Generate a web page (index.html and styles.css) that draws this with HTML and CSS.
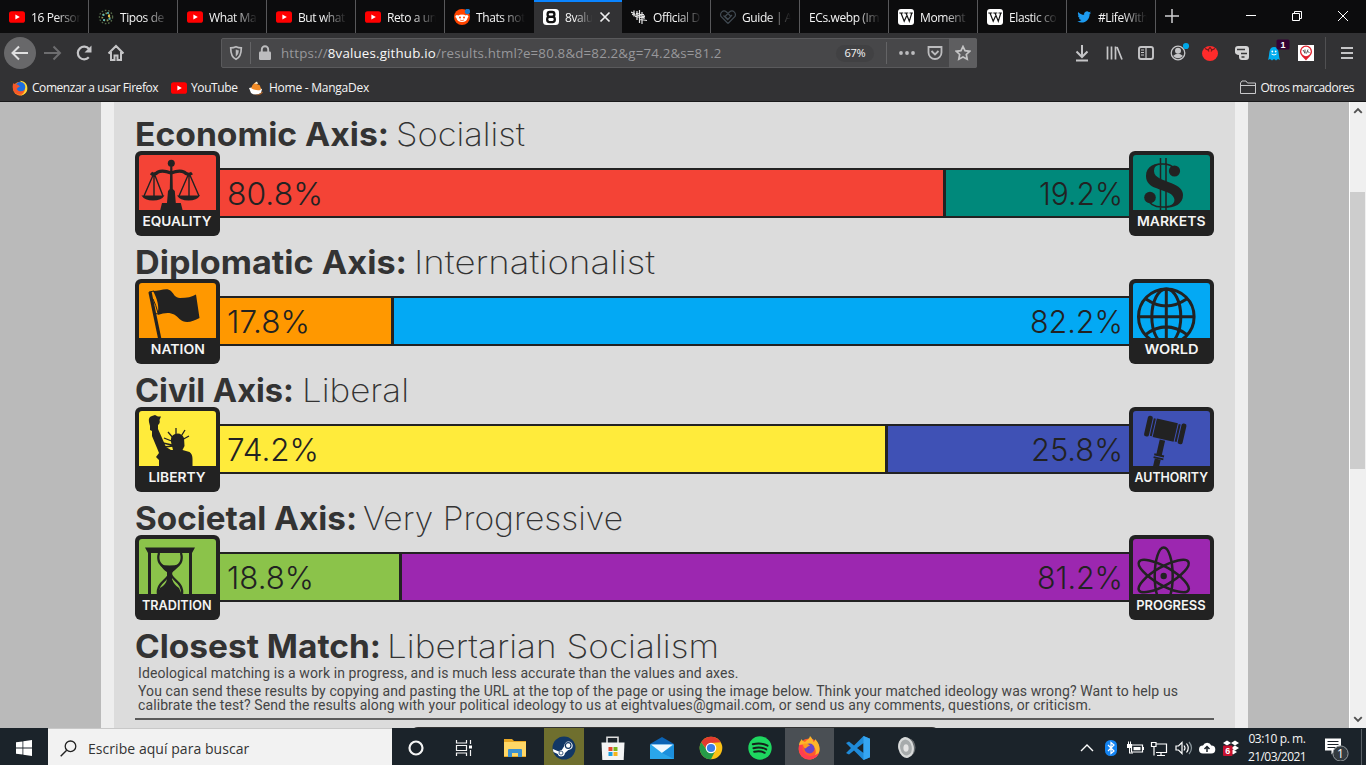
FILE: index.html
```html
<!DOCTYPE html>
<html lang="es">
<head>
<meta charset="utf-8">
<title>8values</title>
<link rel="stylesheet" href="styles.css">
</head>
<body>
<svg class="defs" width="0" height="0">
  <defs>
    <symbol id="yt" viewBox="0 0 16 12"><rect width="16" height="11.6" y=".2" rx="2.6" fill="#f00"/><path d="M6.4 3.4v5.2L10.8 6z" fill="#fff"/></symbol>
    <symbol id="wiki" viewBox="0 0 16 16"><rect width="16" height="16" rx="3" fill="#fff"/><path d="M1.3 4h4M6.3 4h4M11.5 4h3.4M3 4l3.2 8.3L8.6 7M8 4l3.3 8.3L13.8 4" stroke="#111" stroke-width="1.2" fill="none"/></symbol>
    <symbol id="fox" viewBox="0 0 24 24"><circle cx="12" cy="13" r="10.5" fill="#ff5a2c"/><path d="M2 10C2 6 4 5 4.500 3c1 2 2 2.500 3.500 3C10 3.500 12 4 13 0c2 2 3 4 3.500 6 1-1 1.500-1 1.500-3 4 4 5 8 4.500 12-1 5-6 8.500-10.500 8.500 6-2 8-6 6-11-2-4-7-5-9-4z" fill="#ffb52a"/><path d="M2 9c-1 7 2 14 10 14.500 5 0 9-3 10-7-4 4-10 5-14 1-3-3-3-6-2-9z" fill="#ff3d52"/><circle cx="12.500" cy="12.500" r="5" fill="#6a45c8"/><path d="M6 8c3-1 6 0 7 2-3 0-3 2-5 2.500C7 12 6 10 6 8z" fill="#ff9a1f"/></symbol>
    <symbol id="foxblue" viewBox="0 0 24 24"><circle cx="12" cy="13" r="10.500" fill="#ff7a1c"/><path d="M12 1c7 0 12 6 11 13-1 6-6 9-10 9.500 6-4 8-9 5-15z" fill="#ffd83a"/><circle cx="12.500" cy="10.500" r="7.500" fill="#1d6fe0"/><path d="M2 5c2 1 4 2 7 2l3 3c-3 0-3 2-5 3 2 5 8 5 12 2-2 6-9 8-13 5C1 17 0 10 2 5z" fill="#f4572a"/></symbol>
  </defs>
</svg>

<header class="tabs">
  <div class="tab"><svg class="fav" viewBox="0 0 16 16"><use href="#yt" y="2" height="12"/></svg><span>16 Person</span></div>
  <div class="tab"><svg class="fav" viewBox="0 0 16 16"><g fill="none" stroke-dasharray="1.600 1.700"><circle cx="8" cy="8" r="6.600" stroke="#566b4b" stroke-width="1.300"/><circle cx="8" cy="8" r="3.700" stroke="#8f9a57" stroke-width="1.700"/></g><path d="M4.500 6h2M9 4h2M10.500 10h2M5 11h2" stroke="#58c3c7" stroke-width="1.600"/><circle cx="11" cy="7" r="1.200" fill="#e1c14c"/></svg><span>Tipos de</span></div>
  <div class="tab"><svg class="fav" viewBox="0 0 16 16"><use href="#yt" y="2" height="12"/></svg><span>What Ma</span></div>
  <div class="tab"><svg class="fav" viewBox="0 0 16 16"><use href="#yt" y="2" height="12"/></svg><span>But what</span></div>
  <div class="tab"><svg class="fav" viewBox="0 0 16 16"><use href="#yt" y="2" height="12"/></svg><span>Reto a un</span></div>
  <div class="tab"><svg class="fav" viewBox="0 0 16 16"><circle cx="8" cy="8" r="8" fill="#ff4500"/><ellipse cx="8" cy="9.300" rx="5.300" ry="3.800" fill="#fff"/><circle cx="3" cy="7.500" r="1.500" fill="#fff"/><circle cx="12.800" cy="7.500" r="1.500" fill="#fff"/><circle cx="6" cy="8.500" r="1" fill="#ff4500"/><circle cx="10" cy="8.500" r="1" fill="#ff4500"/><path d="M6 11q2 1.200 4 0M8 5.500l.7-2.800" stroke="#ff4500" fill="none" stroke-width=".7"/><circle cx="13.500" cy="2.500" r="2.700" fill="#1677c9"/></svg><span>Thats not</span></div>
  <div class="tab active"><svg class="fav" viewBox="0 0 16 16"><rect width="16" height="16" rx="3.500" fill="#fff"/><g fill="none" stroke="#111" stroke-width="2.300"><rect x="4.600" y="3" width="6.800" height="4.800" rx="2.200"/><rect x="4.200" y="7.800" width="7.600" height="5.300" rx="2.300"/></g></svg><span>8valu</span><svg class="close" viewBox="0 0 12 12"><path d="M1.500 1.500l9 9M10.500 1.500l-9 9" stroke="#eee" stroke-width="1.700"/></svg></div>
  <div class="tab"><svg class="fav" viewBox="0 0 16 16"><path d="M0 3l4 2M3 1.500v6M1 5.500l13 2M6 2v9M8.500 1v13M11 3v12M4 7.500l9 1M9 10.500l7 1M13 6v4M5 4.500l8 1" stroke="#e5e5e5" stroke-width="1.200"/></svg><span>Official D</span></div>
  <div class="tab"><svg class="fav" viewBox="0 0 16 16"><path d="M8 14.500L1 7.500C-.5 4 3 0 6.500 3L11 7.500M8 14.500l7-7C16.500 4 13 0 9.500 3L5 7.500 8 10.500 12 6M3.500 6.500L8 11" fill="none" stroke="#414a52" stroke-width="1.200"/></svg><span>Guide | A</span></div>
  <div class="tab noicon"><span>ECs.webp (Im</span></div>
  <div class="tab"><svg class="fav"><use href="#wiki"/></svg><span>Moment</span></div>
  <div class="tab"><svg class="fav"><use href="#wiki"/></svg><span>Elastic co</span></div>
  <div class="tab"><svg class="fav" viewBox="-1 -1 26 26"><path d="M23.600 5c-.8.400-1.700.6-2.600.8 1-.6 1.600-1.500 2-2.600-.9.500-1.900.9-2.900 1.100a4.600 4.600 0 0 0-7.900 4.200C8.400 8.300 5 6.500 2.700 3.700c-1.200 2-.6 4.700 1.400 6-.7 0-1.400-.2-2-.6 0 2.200 1.500 4.200 3.600 4.600-.6.200-1.300.2-2 .1.600 1.800 2.300 3.100 4.200 3.200A9.300 9.300 0 0 1 1 18.900c9 5.700 20.200-.1 20.200-11.700.9-.6 1.700-1.400 2.400-2.200z" fill="#1d9bf0"/></svg><span>#LifeWith</span></div>
  <svg class="plus" viewBox="0 0 14 14"><path d="M7 0v14M0 7h14" stroke="#d0d0d2" stroke-width="1.500"/></svg>
  <div class="window">
    <svg viewBox="0 0 10 10"><path d="M0 4.500h10" stroke="#fff"/></svg>
    <svg viewBox="0 0 10 10"><path d="M.5 2.500h7v7h-7zM2.500 2.500v-2h7v7h-2" fill="none" stroke="#fff"/></svg>
    <svg viewBox="0 0 10 10"><path d="M0 0l10 10M10 0L0 10" stroke="#fff"/></svg>
  </div>
</header>

<nav class="toolbar">
  <div class="navbtns">
    <svg class="back" viewBox="0 0 32 32"><circle cx="16" cy="16" r="16" fill="#68686a"/><path d="M24 16H9M15 9.500L8.500 16l6.500 6.500" fill="none" stroke="#e0e0e1" stroke-width="2"/></svg>
    <svg viewBox="0 0 32 32"><path d="M8 16h15M17.500 9.500L24 16l-6.500 6.500" fill="none" stroke="#6d6d6f" stroke-width="2"/></svg>
    <svg viewBox="0 0 32 32"><path d="M20.800 20.200A6.300 6.300 0 1 1 21 12" fill="none" stroke="#c5c5c7" stroke-width="2.200"/><path d="M23.500 8.500v7h-7z" fill="#c5c5c7"/></svg>
    <svg viewBox="0 0 32 32"><path d="M8.500 16.500L16 9l7.500 7.500M11 15v8h3.500v-4.500h3V23H21v-8" fill="none" stroke="#c5c5c7" stroke-width="2"/></svg>
  </div>
  <div class="url">
    <svg class="u-shield" viewBox="0 0 14 16"><path d="M7 1.800c2 .9 4 1.100 5.300 1.100C12.300 9 11 12.500 7 14.300 3 12.500 1.700 9 1.700 2.900 3 2.900 5 2.700 7 1.800z" fill="none" stroke="#bcbcbe" stroke-width="1.700"/><path d="M7 4.500v7M7 5l2.500.6C9.300 8.500 8.700 10 7 11" fill="#bcbcbe" stroke="#bcbcbe" stroke-width=".5"/></svg>
    <i></i>
    <svg class="u-lock" viewBox="0 0 12 16"><rect y="6.500" width="12" height="8.500" rx="1.200" fill="#bcbcbe"/><path d="M2.800 7V4.500a3.200 3.200 0 0 1 6.400 0V7" fill="none" stroke="#bcbcbe" stroke-width="1.900"/></svg>
    <span class="addr">https://<b>8values.github.io</b>/results.html?e=80.8&amp;d=82.2&amp;g=74.2&amp;s=81.2</span>
    <span class="pct">67%</span>
    <i></i>
    <svg class="u-dots" viewBox="0 0 16 4"><g fill="#bcbcbe"><circle cx="2" cy="2" r="1.900"/><circle cx="8" cy="2" r="1.900"/><circle cx="14" cy="2" r="1.900"/></g></svg>
    <svg class="u-pocket" viewBox="0 0 16 16"><path d="M1.500 2h13v5.500a6.500 6.500 0 0 1-13 0z" fill="none" stroke="#bcbcbe" stroke-width="1.800"/><path d="M4.500 6L8 9.500 11.500 6" fill="none" stroke="#bcbcbe" stroke-width="1.800"/></svg>
    <div class="star"><svg width="16" height="16" viewBox="0 0 16 16"><path d="M8 1.500l2 4.200 4.700.6-3.400 3.200.9 4.700L8 11.900l-4.200 2.300.9-4.700L1.300 6.300 6 5.700z" fill="none" stroke="#c4c4c5" stroke-width="1.700"/></svg></div>
  </div>
  <div class="ext">
    <svg viewBox="0 0 32 32"><path d="M16 8v12M10.500 14.500L16 20l5.500-5.500M10 23.500h12" fill="none" stroke="#c5c5c7" stroke-width="2"/></svg>
    <svg viewBox="0 0 32 32"><path d="M9.500 9.500v13M13.500 9.500v13M17.500 9.500v13M19 10l5 12.500" fill="none" stroke="#c5c5c7" stroke-width="1.700"/></svg>
    <svg viewBox="0 0 32 32"><rect x="9" y="10" width="14" height="12" rx="2" fill="none" stroke="#c5c5c7" stroke-width="1.900"/><path d="M16 10v12M11 13h3M11 15.500h3M11 18h3" stroke="#c5c5c7" stroke-width="1.200"/></svg>
    <svg viewBox="0 0 32 32"><circle cx="16" cy="16" r="6.800" fill="none" stroke="#c5c5c7" stroke-width="1.300"/><circle cx="16" cy="13.800" r="3" fill="#c5c5c7"/><path d="M11 19q5-4.500 10 0-5 4.500-10 0z" fill="#c5c5c7"/><circle cx="24" cy="9" r="3.100" fill="#00a8e8"/></svg>
    <svg viewBox="0 0 32 32"><ellipse cx="16" cy="16.500" rx="8" ry="7.600" fill="#ff2b2b"/><path d="M11 11.500l3 1.500 2-2.500 2 2.500 3-1.500M14 13l1 1.500M18 13l-1 1.500" fill="none" stroke="#6b1b1b" stroke-width="1.100"/></svg>
    <svg viewBox="0 0 32 32"><path d="M12 9h8q3 0 3 3v8q0 3-3 3h-4q-3 0-3-3v-2q-4-.5-4-3v-3q0-3 3-3z" fill="#d4d4d5"/><path d="M11 12.500h8M15 16.500h6M15.500 20h3" stroke="#38383a" stroke-width="1.400"/></svg>
    <svg viewBox="0 0 32 32"><path d="M10 23c2-5 0-13 6-13s4 8 6 13l-2-1-2 1.500-2-1.500-2 1.500-2-1.500z" fill="#00aef0"/><circle cx="14.300" cy="14.500" r=".9" fill="#fff"/><circle cx="17.700" cy="14.500" r=".9" fill="#fff"/><path d="M13.500 17q2.500 2 5 0" stroke="#fff" fill="none"/><rect x="18.500" y="2.500" width="13" height="10" rx="1.500" fill="#330033"/><text x="25" y="10.800" class="badge">1</text></svg>
    <svg viewBox="0 0 32 32"><rect x="8" y="8" width="16" height="16" fill="#fff"/><path d="M16 23.500c-2-3-6-5-6-9a6 6 0 0 1 12 0c0 4-4 6-6 9z" fill="#e0202c"/><circle cx="16" cy="14.500" r="4.700" fill="#fff"/><path d="M13 13l2 3M15 12.500v4M18 12.500l-1.500 4M17.500 14l2 2" stroke="#444" stroke-width=".9"/></svg>
    <i></i>
    <svg class="menu" viewBox="0 0 32 32"><path d="M10 11h12M10 16h12M10 21h12" stroke="#c5c5c7" stroke-width="1.900"/></svg>
  </div>
</nav>

<div class="bookmarks">
  <svg class="bm"><use href="#foxblue"/></svg><span class="b1">Comenzar a usar Firefox</span>
  <svg class="bm" viewBox="0 0 16 16"><use href="#yt" y="2" height="12"/></svg><span class="b2">YouTube</span>
  <svg class="bm" viewBox="0 0 16 16"><path d="M1 8q7-2 13 1l-1 4q-6 3-10 0z" fill="#fff"/><path d="M3.500 8.500q0-4 4-6 1 2 4 2.500 2 3 1 5-4 1-9-1.500z" fill="#f18b26"/><path d="M6 3.500l3-2 1 2.500z" fill="#fff3d5"/><path d="M5 14.500q6 1 9-3l1 1q-3 4-10 2z" fill="#b0642b"/></svg><span class="b3">Home - MangaDex</span>
  <svg class="folder" viewBox="0 0 16 15"><path d="M.5 13.500V3L2 1h4l1.500 2h8v10.500zM.5 5.500h15" fill="none" stroke="#c8c8ca" stroke-width="1"/></svg><span class="b4">Otros marcadores</span>
</div>

<main class="viewport">
  <div class="page">
    <section class="axis">
      <svg class="head" viewBox="0 0 1079 33"><text class="hb" x="0" y="28" textLength="254" lengthAdjust="spacingAndGlyphs">Economic Axis:</text><text class="hl" x="261" y="28" textLength="129" lengthAdjust="spacingAndGlyphs">Socialist</text></svg>
      <div class="row">
        <svg class="tile" viewBox="0 0 85 85"><rect class="k" width="85" height="85" rx="6"/><path d="M4 59V7q0-3 3-3h71q3 0 3 3v52z" fill="#f44336"/><circle class="k" cx="36.300" cy="12.300" r="3.500"/><path class="s" stroke-width="3.200" d="M16 22q3 3 7-1 5-2 13 1 8-3 13-1 4 4 8 1"/><path class="s" stroke-width="1.400" d="M19 22L9 45M19 22v23M19 22l9 23M54 22L44 45M54 22v23M54 22l10 23"/><path class="k" d="M6.500 44.500h23q-3 5-11.500 5t-11.500-5zM42 44.500h23q-3 5-11.500 5T42 44.500zM35.300 12h2l.5 26 2 2 1 12h5l2 8H25l2-8h5l1-12 1.800-2z"/><text x="7.500" y="74.700" textLength="69" lengthAdjust="spacingAndGlyphs">EQUALITY</text></svg>
        <div class="bar"><div class="left red" style="width:726px"><svg class="num" width="96"><text x="0" y="35" textLength="96" lengthAdjust="spacingAndGlyphs">80.8%</text></svg></div><div class="right teal"><svg class="num" width="84"><text x="0" y="35" textLength="84" lengthAdjust="spacingAndGlyphs">19.2%</text></svg></div></div>
        <svg class="tile" viewBox="0 0 85 85"><rect class="k" width="85" height="85" rx="6"/><path d="M4 59V7q0-3 3-3h71q3 0 3 3v52z" fill="#00897b"/><path class="s" stroke-width="1.500" d="M31.500 7v53M37 7v53M46 18q-4-5-12-5-10 0-13 6M18 47q3 9 15 9 9 0 14-4"/><path class="k" d="M17 25C17 15 26 12 34 12q-9 1-9 8c0 7 10 9 17 12 8 3 12 7 12 12 0 9-8 13-20 13 8-1 13-5 11-10-2-6-12-7-18-10-6-2-10-6-10-12z"/><circle class="k" cx="45.500" cy="20" r="5.600"/><circle class="k" cx="21" cy="46.500" r="5.800"/><text x="8" y="74.700" textLength="68.500" lengthAdjust="spacingAndGlyphs">MARKETS</text></svg>
      </div>
    </section>
    <section class="axis">
      <svg class="head" viewBox="0 0 1079 33"><text class="hb" x="0" y="28" textLength="272" lengthAdjust="spacingAndGlyphs">Diplomatic Axis:</text><text class="hl" x="279" y="28" textLength="241" lengthAdjust="spacingAndGlyphs">Internationalist</text></svg>
      <div class="row">
        <svg class="tile" viewBox="0 0 85 85"><rect class="k" width="85" height="85" rx="6"/><path d="M4 59V7q0-3 3-3h71q3 0 3 3v52z" fill="#ff9800"/><path class="s" stroke-width="3.300" d="M15 13l10 48"/><path class="s" stroke-width="1" d="M14 13l5-1M21 35l2-1q-2-8-5-14"/><path class="k" d="M18 12c7 0 14-4 18 0 3 3 4 7 9 7 7 0 12-1 16-3.500l3.500 23.500c-7 4-15 6-20 1-5-6-11-8-22-4 2-8 0-16-4.500-24z"/><text x="15.800" y="74.700" textLength="54" lengthAdjust="spacingAndGlyphs">NATION</text></svg>
        <div class="bar"><div class="left orange" style="width:174px"><svg class="num" width="84"><text x="0" y="35" textLength="83" lengthAdjust="spacingAndGlyphs">17.8%</text></svg></div><div class="right blue"><svg class="num" width="93"><text x="0" y="35" textLength="93" lengthAdjust="spacingAndGlyphs">82.2%</text></svg></div></div>
        <svg class="tile" viewBox="0 0 85 85"><rect class="k" width="85" height="85" rx="6"/><path d="M4 59V7q0-3 3-3h71q3 0 3 3v52z" fill="#03a9f4"/><g class="s" stroke-width="3"><circle cx="37.300" cy="37.700" r="27.800"/><ellipse cx="37.300" cy="37.700" rx="14.500" ry="27.800"/><path d="M37.300 10v50M9.500 37.700h56M17 20q20 14 40.600 0M17 55.400q20-15 40.600 0"/></g><path class="k" d="M4 59h77v9H4z"/><text x="15.500" y="74.700" textLength="54" lengthAdjust="spacingAndGlyphs">WORLD</text></svg>
      </div>
    </section>
    <section class="axis">
      <svg class="head" viewBox="0 0 1079 33"><text class="hb" x="0" y="28" textLength="159" lengthAdjust="spacingAndGlyphs">Civil Axis:</text><text class="hl" x="167" y="28" textLength="107" lengthAdjust="spacingAndGlyphs">Liberal</text></svg>
      <div class="row">
        <svg class="tile" viewBox="0 0 85 85"><rect class="k" width="85" height="85" rx="6"/><path d="M4 59V7q0-3 3-3h71q3 0 3 3v52z" fill="#ffeb3b"/><path class="k" d="M14 15q-1-5 3-6l3-1 3 1.500h3L24.500 13q1 3-1.500 5v4l4 9 4 9 5 3h2l-2-8q-1-6 4-8 6-2 9 4l.5 8-2 4 7 2q3 2 3 7v8H24V53l-3-3 3-4-2-5-5-12v-5l-2-1v-4z"/><path class="s" stroke-width="1.300" d="M29 31l10 4M33 25l6 7M41 21v10M50 23l-5 8M54 29l-9 5M28 36l9 2M29 40l9-1"/><text x="13.500" y="74.700" textLength="57" lengthAdjust="spacingAndGlyphs">LIBERTY</text></svg>
        <div class="bar"><div class="left yellow" style="width:668px"><svg class="num" width="92"><text x="0" y="35" textLength="92" lengthAdjust="spacingAndGlyphs">74.2%</text></svg></div><div class="right indigo"><svg class="num" width="92"><text x="0" y="35" textLength="92" lengthAdjust="spacingAndGlyphs">25.8%</text></svg></div></div>
        <svg class="tile" viewBox="0 0 85 85"><rect class="k" width="85" height="85" rx="6"/><path d="M4 59V7q0-3 3-3h71q3 0 3 3v52z" fill="#3f51b5"/><g class="k" transform="rotate(13 36 23)"><rect x="16.500" y="12.500" width="5" height="21" rx="2"/><rect x="22.500" y="14" width="2" height="18"/><rect x="25.500" y="13.500" width="21.500" height="19"/><rect x="48" y="14" width="2" height="18"/><rect x="51" y="12.500" width="5" height="21" rx="2"/><rect x="33" y="33.500" width="5.500" height="16"/><rect x="31" y="48" width="10" height="2"/><rect x="31" y="51" width="10" height="2"/><rect x="32.500" y="53" width="6" height="9"/></g><text x="5.500" y="74.700" textLength="73.500" lengthAdjust="spacingAndGlyphs">AUTHORITY</text></svg>
      </div>
    </section>
    <section class="axis">
      <svg class="head" viewBox="0 0 1079 33"><text class="hb" x="0" y="28" textLength="222" lengthAdjust="spacingAndGlyphs">Societal Axis:</text><text class="hl" x="228" y="28" textLength="260" lengthAdjust="spacingAndGlyphs">Very Progressive</text></svg>
      <div class="row">
        <svg class="tile" viewBox="0 0 85 85"><rect class="k" width="85" height="85" rx="6"/><path d="M4 59V7q0-3 3-3h71q3 0 3 3v52z" fill="#8bc34a"/><path class="k" d="M10 12.500h50l-3 5.500H13zM13 17h3v43h-3zM54 17h3v43h-3zM25 29q9 3 20 0-4 6-8 8v7q2 6 7 9l3 7H22l3-7q6-3 7-9v-7q-4-2-7-8z"/><path class="s" stroke-width="2.300" d="M24 18c-4 14 10 14 10 20.500S21 47 23 60M46 18c4 14-10 14-10 20.500S49 47 47 60"/><text x="7" y="74.700" textLength="69.500" lengthAdjust="spacingAndGlyphs">TRADITION</text></svg>
        <div class="bar"><div class="left lime" style="width:182px"><svg class="num" width="87"><text x="0" y="35" textLength="87" lengthAdjust="spacingAndGlyphs">18.8%</text></svg></div><div class="right purple"><svg class="num" width="86"><text x="0" y="35" textLength="86" lengthAdjust="spacingAndGlyphs">81.2%</text></svg></div></div>
        <svg class="tile" viewBox="0 0 85 85"><rect class="k" width="85" height="85" rx="6"/><path d="M4 59V7q0-3 3-3h71q3 0 3 3v52z" fill="#9c27b0"/><g class="s" stroke-width="2.500"><ellipse cx="34.700" cy="41" rx="9" ry="28.500"/><ellipse cx="34.700" cy="41" rx="9" ry="28.500" transform="rotate(60 34.700 41)"/><ellipse cx="34.700" cy="41" rx="9" ry="28.500" transform="rotate(-60 34.700 41)"/></g><circle class="k" cx="34.700" cy="41" r="3.200"/><path class="k" d="M4 59h77v12H4z"/><text x="7.200" y="74.700" textLength="69.500" lengthAdjust="spacingAndGlyphs">PROGRESS</text></svg>
      </div>
    </section>
    <svg class="head" viewBox="0 0 1079 33"><text class="hb" x="0" y="28" textLength="246" lengthAdjust="spacingAndGlyphs">Closest Match:</text><text class="hl" x="252" y="28" textLength="332" lengthAdjust="spacingAndGlyphs">Libertarian Socialism</text></svg>
    <p class="note">Ideological matching is a work in progress, and is much less accurate than the values and axes.</p>
    <p class="info">You can send these results by copying and pasting the URL at the top of the page or using the image below. Think your matched ideology was wrong? Want to help us<br>calibrate the test? Send the results along with your political ideology to us at eightvalues@gmail.com, or send us any comments, questions, or criticism.</p>
    <hr>
    <div class="card"></div>
  </div>
  <aside class="scroll">
    <svg viewBox="0 0 17 17"><path d="M4.500 11L8.500 7l4 4" fill="none" stroke="#505050" stroke-width="2"/></svg>
    <div class="thumb"></div>
    <svg viewBox="0 0 17 17"><path d="M4.500 6l4 4 4-4" fill="none" stroke="#505050" stroke-width="2"/></svg>
  </aside>
</main>

<footer class="taskbar">
  <div class="start"><svg width="16" height="16" viewBox="0 0 16 16"><path d="M0 2.300L6.500 1.400v6.200H0zM7.300 1.300L16 0v7.600H7.300zM0 8.400h6.500v6.200L0 13.700zM7.300 8.400H16V16l-8.700-1.300z" fill="#fff"/></svg></div>
  <div class="search"><svg width="17" height="17" viewBox="0 0 17 17"><circle cx="10.500" cy="6.300" r="5.300" fill="none" stroke="#222" stroke-width="1.300"/><path d="M6.700 10.300L.7 16.300" stroke="#222" stroke-width="1.400"/></svg><span>Escribe aquí para buscar</span></div>
  <div class="apps">
    <div><svg viewBox="0 0 24 24"><circle cx="12" cy="12" r="6.500" fill="none" stroke="#f4f4f4" stroke-width="2.200"/></svg></div>
    <div class="views"><svg viewBox="0 0 24 24"><path d="M4.500 4v3h10V4M4.500 20v-3h10v3M4.500 9.500h10v5h-10zM18.500 4v4M18.500 14v6" fill="none" stroke="#f4f4f4" stroke-width="1.200"/><path d="M17 9.500h3v3h-3z" fill="#fff"/></svg></div>
    <div><svg viewBox="0 0 24 24"><path d="M1 3h8l2 2h12v16H1z" fill="#e9a825"/><path d="M1 6h22v14H1z" fill="#ffd766"/><path d="M5 21v-7q0-1 1-1h12q1 0 1 1v7h-4v-4H9v4z" fill="#3d91cf"/></svg></div>
    <div class="steam"><svg viewBox="0 0 24 24"><circle cx="12" cy="12" r="11.500" fill="#123765"/><path d="M.8 13l6 2.500q1-1.500 3-1.500l2.500-4a4.200 4.200 0 1 1 4 4L13 17q-.5 3.500-4 3.500-2.500 0-3.300-2.500L1.500 16z" fill="#fff"/><circle cx="16.200" cy="9.500" r="2.800" fill="#fff" stroke="#123765" stroke-width="1.200"/><circle cx="9" cy="17" r="2" fill="none" stroke="#123765" stroke-width=".8"/></svg></div>
    <div><svg viewBox="0 0 24 24"><path d="M6 7V1.200h11V7" fill="none" stroke="#ddd" stroke-width="1.600"/><path d="M.5 6.500h23L22.700 24H1.300z" fill="#f4f4f4"/><path d="M7.500 11h4v4h-4z" fill="#e5472d"/><path d="M12.500 11h4v4h-4z" fill="#78b51b"/><path d="M7.500 16h4v4h-4z" fill="#1ba0e1"/><path d="M12.500 16h4v4h-4z" fill="#f5b51c"/></svg></div>
    <div><svg viewBox="0 0 24 24"><path d="M0 8L12 1l12 7v15H0z" fill="#0b63b5"/><path d="M0 8.500h24V23H0z" fill="#2aa6ea"/><path d="M1 8.500h22L12 17z" fill="#eef8ff"/><path d="M12 17L24 9v14z" fill="#1c8fdc"/></svg></div>
    <div><svg viewBox="0 0 24 24"><circle cx="12" cy="12" r="11.300" fill="#fbc116"/><path d="M2.200 6.300A11.300 11.300 0 0 1 21.800 6.300L12 7 8 14z" fill="#e33b2e"/><path d="M2.200 6.300A11.300 11.300 0 0 0 12 23.300l4-8-8-1z" fill="#269b48"/><circle cx="12" cy="12" r="5.300" fill="#fff"/><circle cx="12" cy="12" r="4.100" fill="#3b7ee8"/></svg></div>
    <div><svg viewBox="0 0 24 24"><circle cx="12" cy="12" r="11.700" fill="#1ed760"/><path d="M4.800 8.300q8-2.300 14.700 1.400M5.500 12.200q7-1.900 12.700 1.200M6.200 15.800q6-1.500 10.500 1" fill="none" stroke="#15221c" stroke-width="2" stroke-linecap="round"/></svg></div>
    <div class="current"><svg><use href="#fox"/></svg></div>
    <div><svg viewBox="0 0 24 24"><path d="M17.500 0L24 2.800v18.400L17.500 24 8 14.500 3 18.500 0 17l5-5-5-5 3-1.500 5 4zM17.500 7l-6.500 5 6.500 5z" fill="#1f8ad8" fill-rule="evenodd"/><path d="M17.500 0L24 2.800v18.400L17.500 24z" fill="#35a5f2"/></svg></div>
    <div><svg viewBox="0 0 24 24"><ellipse cx="14" cy="11.500" rx="6.500" ry="9" fill="#666b6e"/><ellipse cx="11" cy="11.500" rx="7.800" ry="10.500" transform="rotate(-12 11 11.500)" fill="#d8dada"/><ellipse cx="11" cy="11.500" rx="5.800" ry="8" transform="rotate(-12 11 11.500)" fill="#a7abac"/><ellipse cx="11" cy="12" rx="2.600" ry="3.800" fill="#e4e4e4"/></svg></div>
  </div>
  <div class="tray">
    <svg viewBox="0 0 24 24"><path d="M6 15l6-6 6 6" fill="none" stroke="#fff" stroke-width="1.400"/></svg>
    <svg viewBox="0 0 24 24"><rect x="6" y="4" width="12" height="16" rx="5.500" fill="#1484f2"/><path d="M9 9l6 6-3 2.500v-11L15 9l-6 6" fill="none" stroke="#fff" stroke-width="1.200"/></svg>
    <svg viewBox="0 0 24 24"><path d="M8.500 9h11v7h-11z" fill="none" stroke="#fff" stroke-width="1.200"/><path d="M10.500 11h7v3.200h-7zM19.500 11h1.500v3h-1.500zM4 8h5v4H4zM5 5.500h1V8H5zM7 5.500h1V8H7zM6 12h1v4.500h3v1H6z" fill="#fff"/></svg>
    <svg viewBox="0 0 24 24"><path d="M9 8h10.500v8.500H9M14 16.500v3M10 19.500h8M7 10.500v9M4.500 6.500h4.500v4H4.500z" fill="none" stroke="#fff" stroke-width="1.200"/></svg>
    <svg viewBox="0 0 24 24"><path d="M5 10h2.500L11 6.500v11L7.500 14H5zM13 9.500q2 2.500 0 5M15.500 7.500q3.500 4.500 0 9" fill="none" stroke="#fff" stroke-width="1.200"/><path d="M18 6q5 6 0 12" fill="none" stroke="#88949a" stroke-width="1.200"/></svg>
    <svg viewBox="0 0 24 24"><path d="M8 17.500a4 4 0 0 1 0-8 4.500 4.500 0 0 1 8.300 0 4 4 0 0 1 0 8z" fill="#fff"/><path d="M12 16v-5M9.500 13L12 10.500 14.500 13" fill="none" stroke="#1b232a" stroke-width="1.500"/></svg>
    <svg viewBox="0 0 24 24"><path d="M4 7l4-2.500 4 2.500-4 2.500zM12 7l4-2.500L20 7l-4 2.500zM12 12l4-2.500 4 2.500-4 2.500zM10 16l4-2.500 4 2.500-4 2.500z" fill="#fff"/><rect x="4" y="9.500" width="9.500" height="10.500" rx="1" fill="#c8102e"/><text x="8.700" y="18" class="badge">6</text></svg>
    <div class="clock"><span>03:10 p. m.</span><span class="date">21/03/2021</span></div>
    <svg class="notif" viewBox="0 0 26 24"><path d="M2 1.500h16v12H12l-3.500 4v-4H2z" fill="#fff"/><path d="M4.500 4.500h11M4.500 7.500h11M4.500 10.500h8" stroke="#1b232a"/><circle cx="17.500" cy="16.500" r="7.600" fill="#343b40" stroke="#939a9e"/><text x="17.500" y="20.500" class="count">1</text></svg>
    <i></i>
  </div>
</footer>
</body>
</html>
```

FILE: styles.css
```css
* { box-sizing: border-box; }
body { margin: 0; width: 1366px; height: 765px; overflow: hidden; display: flex; flex-direction: column; font: 12px "Open Sans", "Noto Sans", sans-serif; color: #f5f5f5; background: #bababa; }
svg { display: block; flex: none; }
.defs { position: absolute; }
.s { fill: none; stroke: #222; }
.k { fill: #222; }

.tabs { height: 33px; flex: none; display: flex; align-items: center; background: #0c0c0d; }
.tab { width: 89px; height: 33px; flex: none; display: flex; align-items: center; padding: 1px 6px 0 9px; gap: 6px; border-right: 1px solid #58585a; }
.tab:nth-child(6) { border-right-color: #0c0c0d; }
.tab.noicon { padding-left: 9px; }
.fav { width: 16px; height: 16px; }
.tab span { flex: 1; white-space: nowrap; letter-spacing: -.4px; -webkit-mask-image: linear-gradient(90deg, #000 48%, transparent 96%); mask-image: linear-gradient(90deg, #000 48%, transparent 96%); }
.tab.noicon span { -webkit-mask-image: linear-gradient(90deg, #000 66%, transparent 98%); mask-image: linear-gradient(90deg, #000 66%, transparent 98%); }
.tab.active { width: 88px; background: #323234; border-right: 0; border-top: 2px solid #0a84ff; padding: 0 11px 1px 9px; }
.tab.active span { -webkit-mask-image: linear-gradient(90deg, #000 35%, transparent 98%); mask-image: linear-gradient(90deg, #000 35%, transparent 98%); }
.close { width: 12px; height: 12px; }
.plus { width: 14px; height: 14px; margin-left: 9px; margin-bottom: 1px; }
.window { margin-left: auto; display: flex; gap: 36px; padding: 0 18px 1px 0; }
.window svg { width: 10px; height: 10px; }

.toolbar { height: 41px; flex: none; display: flex; align-items: flex-start; padding: 4px 0 0 4px; background: #323234; }
.navbtns { display: flex; width: 217px; }
.navbtns svg { width: 32px; height: 32px; }
.url { width: 756px; height: 30px; margin-top: 1px; display: flex; align-items: center; background: #474749; border: 1px solid #5a5a5c; border-radius: 2px; }
.url i { width: 1px; height: 22px; background: #646466; }
.u-shield { width: 14px; height: 16px; margin: 0 7px; }
.u-lock { width: 12px; height: 16px; margin: 0 10px 0 8px; }
.addr { width: 555px; font-size: 13.300px; color: #98989b; white-space: nowrap; letter-spacing: .18px; }
.addr b { font-weight: 400; color: #f9f9fa; }
.pct { width: 38px; height: 17px; line-height: 16px; border-radius: 9px; background: #414143; text-align: center; font-size: 11px; letter-spacing: -.3px; margin-right: 12px; }
.u-dots { width: 16px; height: 4px; margin: 0 12px; }
.u-pocket { width: 16px; height: 16px; }
.star { width: 28px; height: 30px; margin: 0 -1px 0 auto; border-radius: 0 2px 2px 0; background: #5e5e60; display: grid; place-items: center; }
.ext { display: flex; margin-left: 89px; }
.ext svg { width: 32px; height: 32px; }
.ext i { width: 1px; height: 32px; background: #505052; margin: 0 5px 0 3px; }
.badge { font: bold 9px "Liberation Sans", sans-serif; fill: #fff; text-anchor: middle; }

.bookmarks { height: 28px; flex: none; display: flex; align-items: center; padding: 0 12px; background: #323234; border-bottom: 1px solid #19191a; white-space: nowrap; }
.bm { width: 16px; height: 16px; margin-right: 4px; }
.b1 { width: 139px; letter-spacing: -.44px; }
.b2 { width: 57px; letter-spacing: -.4px; }
.b3 { margin-left: 1px; letter-spacing: -.25px; }
.b4 { letter-spacing: -.5px; }
.folder { width: 16px; height: 15px; margin: 0 4px 0 auto; }

.viewport { height: 626px; flex: none; display: flex; justify-content: space-between; background: #bababa; overflow: hidden; }
.page { width: 1147px; height: 626px; margin-left: 101px; border: solid #eee; border-width: 0 13px; background: #dcdcdc; padding: 16px 21px 0; overflow: hidden; }
.axis { height: 128px; }
.head { width: 1079px; height: 33px; overflow: visible; font-family: Inter, "Open Sans", sans-serif; }
.hb { font-size: 32.500px; font-weight: 700; fill: #333; }
.hl { font-size: 32.500px; font-weight: 200; fill: #333; }
.row { display: flex; position: relative; }
.tile { width: 85px; height: 85px; }
.tile text { font: 600 12.800px Inter, sans-serif; fill: #f4f4f4; }
.bar { width: 909px; height: 50px; margin-top: 17px; display: flex; border: solid #222; border-width: 2px 0; }
.left { flex: none; border-right: 3px solid #222; padding-left: 7px; }
.right { flex: 1; display: flex; justify-content: flex-end; padding-right: 6px; }
.num { height: 46px; overflow: visible; font: 300 31.500px Inter, sans-serif; fill: #222; }
.red { background: #f44336; } .teal { background: #00897b; }
.orange { background: #ff9800; } .blue { background: #03a9f4; }
.yellow { background: #ffeb3b; } .indigo { background: #3f51b5; }
.lime { background: #8bc34a; } .purple { background: #9c27b0; }
p { margin: 0; padding-left: 3px; font: 14px/14px Roboto, sans-serif; letter-spacing: .1px; color: #444; white-space: nowrap; }
.note { padding-top: 3px; }
.info { padding-top: 4px; }
hr { margin: 6px 0 0; border: 0; height: 2px; background: #5a5a5a; }
.card { width: 530px; height: 20px; margin: 7px auto 0; border-radius: 8px; background: #333; }
.scroll { width: 17px; height: 626px; background: #f0f0f0; border-left: 1px solid #fff; display: flex; flex-direction: column; }
.scroll svg { width: 16px; height: 17px; }
.thumb { width: 15px; height: 277px; margin: 73px 0 auto; background: #cdcdcd; }

.taskbar { height: 37px; flex: none; display: flex; background: #1b232a; }
.start { width: 48px; display: grid; place-items: center; padding-top: 3px; }
.search { width: 344px; background: #f2f2f2; border-top: 1px solid #c8c8c8; display: flex; align-items: center; padding: 2px 0 0 12px; gap: 11px; color: #333; font-size: 14px; }
.search span { letter-spacing: .05px; }
.apps { display: flex; }
.apps div { width: 49.100px; display: grid; place-items: center; padding-top: 2px; }
.apps div:first-child { width: 48px; }
.apps .views { margin: 0 2px 0 -1px; }
.apps svg { width: 24px; height: 24px; }
.apps .steam { width: 40px; margin: 0 4.500px; background: #6f6f2e; }
.apps .current { background: #4a4f54; }
.tray { margin-left: auto; display: flex; align-items: center; padding-top: 2px; }
.tray svg { width: 24px; height: 24px; }
.clock { width: 68px; display: flex; flex-direction: column; align-items: center; line-height: 18px; white-space: nowrap; letter-spacing: -.4px; }
.date { letter-spacing: -.55px; }
.tray .notif { width: 26px; height: 24px; margin: 2px 12px 0 12px; }
.tray i { width: 1px; height: 37px; background: #596066; margin-right: 4px; }
.count { font: 12px "Open Sans", sans-serif; fill: #fff; text-anchor: middle; }
```
